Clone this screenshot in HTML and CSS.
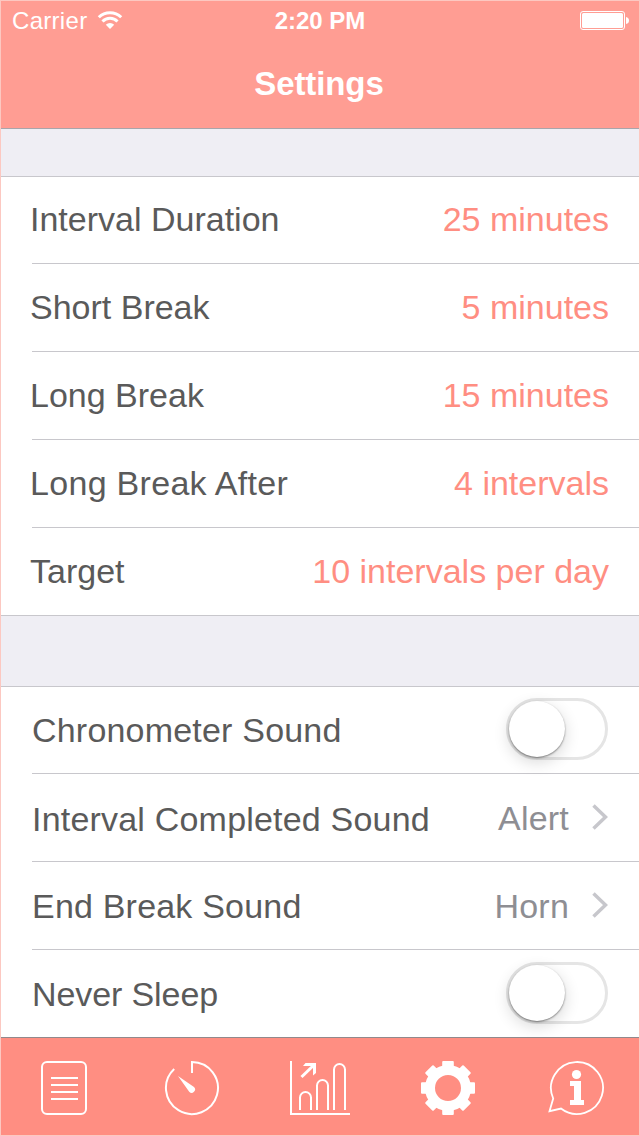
FILE: index.html
```html
<!DOCTYPE html>
<html lang="en">
<head>
    <meta charset="UTF-8">
    <meta name="viewport" content="width=device-width, initial-scale=1.0">
    <title>Settings</title>
    <link rel="stylesheet" href="styles.css">
</head>
<body>
    <div class="phone">
        <header class="header">
            <div class="status-bar">
                <div class="carrier">
                    <span>Carrier</span>
                    <svg class="wifi" width="26" height="20" viewBox="0 0 26 20">
                        <g fill="none" stroke="#fff" stroke-width="3">
                            <path d="M1.800 7.200A16 16 0 0 1 24.200 7.200"/>
                            <path d="M5.500 11.500A10.500 10.500 0 0 1 20.500 11.500"/>
                        </g>
                        <path d="M13 19L8.800 14.800A6 6 0 0 1 17.200 14.800Z" fill="#fff"/>
                    </svg>
                </div>
                <div class="time">2:20 PM</div>
                <svg class="battery" width="49" height="19" viewBox="0 0 49 19">
                    <rect x=".5" y=".5" width="44" height="18" rx="2.5" fill="none" stroke="#fff"/>
                    <rect x="2" y="2" width="41" height="15" rx="1.5" fill="#fff"/>
                    <path d="M46 6Q49 6.500 49 9.500T46 13Z" fill="#fff"/>
                </svg>
            </div>
            <h1 class="title">Settings</h1>
        </header>

        <main class="content">
            <div class="group durations">
                <div class="row first"><span class="label">Interval Duration</span><span class="value">25 minutes</span></div>
                <div class="row"><span class="label">Short Break</span><span class="value">5 minutes</span></div>
                <div class="row"><span class="label">Long Break</span><span class="value">15 minutes</span></div>
                <div class="row"><span class="label wide">Long Break After</span><span class="value">4 intervals</span></div>
                <div class="row"><span class="label">Target</span><span class="value">10 intervals per day</span></div>
            </div>

            <div class="group sounds">
                <div class="row first">
                    <span class="label">Chronometer Sound</span>
                    <span class="switch"><span class="knob"></span></span>
                </div>
                <div class="row">
                    <span class="label low">Interval Completed Sound</span>
                    <span class="detail">Alert
                        <svg class="chevron" width="17" height="26" viewBox="0 0 17 26"><path d="M2.500 1.500L14.500 13L2.500 24.500"/></svg>
                    </span>
                </div>
                <div class="row">
                    <span class="label">End Break Sound</span>
                    <span class="detail">Horn
                        <svg class="chevron" width="17" height="26" viewBox="0 0 17 26"><path d="M2.500 1.500L14.500 13L2.500 24.500"/></svg>
                    </span>
                </div>
                <div class="row">
                    <span class="label tight">Never Sleep</span>
                    <span class="switch"><span class="knob"></span></span>
                </div>
            </div>
        </main>

        <nav class="tab-bar">
            <a class="tab">
                <svg class="icon" viewBox="0 0 60 60">
                    <rect x="8" y="4" width="44" height="52" rx="5"/>
                    <path d="M17 20H44M17 27H44M17 34H44M17 41H44"/>
                </svg>
            </a>
            <a class="tab">
                <svg class="icon" viewBox="0 0 60 60">
                    <path d="M30 15V4A26 26 0 1 1 12.200 11"/>
                    <path class="solid" d="M16 18L32 29A3.300 3.300 0 1 1 27.200 33.800Z"/>
                </svg>
            </a>
            <a class="tab">
                <svg class="icon" viewBox="0 0 60 60">
                    <path d="M1 3V56H60"/>
                    <path d="M10 52V39.500A5.500 5.500 0 0 1 21 39.500V52M27 52V27.500A5.500 5.500 0 0 1 38 27.500V52M44 52V11.500A5.500 5.500 0 0 1 55 11.500V52"/>
                    <path d="M11.500 19L24.500 6.500" stroke-width="3"/>
                    <path class="solid" d="M15.500 5H26V15L23 17.500V8H13Z"/>
                </svg>
            </a>
            <a class="tab">
                <svg class="icon" viewBox="0 0 60 60">
                    <circle cx="30" cy="30" r="18" stroke-width="10"/>
                    <g class="solid">
                        <rect id="tooth" x="24.200" y="3" width="11.600" height="9" rx="1"/>
                        <use href="#tooth" transform="rotate(45 30 30)"/>
                        <use href="#tooth" transform="rotate(90 30 30)"/>
                        <use href="#tooth" transform="rotate(135 30 30)"/>
                        <use href="#tooth" transform="rotate(180 30 30)"/>
                        <use href="#tooth" transform="rotate(225 30 30)"/>
                        <use href="#tooth" transform="rotate(270 30 30)"/>
                        <use href="#tooth" transform="rotate(315 30 30)"/>
                    </g>
                </svg>
            </a>
            <a class="tab">
                <svg class="icon" viewBox="0 0 60 60">
                    <path d="M7.200 40.500A26 26 0 1 1 15 50.500L3.500 53.200Z" stroke-width="1.800"/>
                    <circle class="solid" cx="30.500" cy="16.500" r="4.600"/>
                    <path class="solid" d="M24 23H35V42H38V47H24V42H28V28H24Z"/>
                </svg>
            </a>
        </nav>
    </div>
</body>
</html>
```

FILE: styles.css
```css
* {
    box-sizing: border-box;
}
body {
    font-family: "Liberation Sans", Arial, sans-serif;
    margin: 0;
    background-color: #efeef4;
}
.phone {
    position: relative;
    display: flex;
    flex-direction: column;
    width: 640px;
    height: 1136px;
    overflow: hidden;
}
.phone::after {
    content: "";
    position: absolute;
    inset: 0;
    border: 1px solid #fcc8c1;
}
.header {
    height: 129px;
    background: #ff9d93;
    border-bottom: 1px solid #a9a5aa;
    color: #fff;
}
.status-bar {
    display: grid;
    grid-template-columns: 1fr auto 1fr;
    align-items: center;
    height: 40px;
    padding: 1px 11px 0 12px;
    font-size: 24px;
}
.carrier {
    display: flex;
    align-items: center;
    gap: 10px;
    letter-spacing: 0.3px;
}
.wifi {
    margin-top: -2px;
}
.time {
    font-weight: bold;
    margin-right: 1px;
}
.battery {
    justify-self: end;
}
.title {
    margin: 0;
    font-size: 33px;
    line-height: 40px;
    padding: 24px 2px 0 0;
    text-align: center;
    letter-spacing: -0.1px;
}
.group {
    background: #fff;
    border-top: 1px solid #c8c7cc;
}
.durations {
    margin-top: 47px;
    border-bottom: 1px solid #c8c7cc;
}
.sounds {
    margin-top: 70px;
}
.row {
    display: flex;
    align-items: center;
    justify-content: space-between;
    height: 88px;
    margin-left: 32px;
    padding-right: 32px;
    border-bottom: 1px solid #c8c7cc;
    font-size: 34px;
    line-height: 40px;
    letter-spacing: 0.2px;
}
.durations .row {
    padding-bottom: 2px;
}
.row.first {
    height: 87px;
}
.durations .row:last-child,
.sounds .row:last-child {
    height: 87px;
    border-bottom: none;
}
.label {
    color: #5a5a5a;
    margin-left: -2px;
}
.durations .label {
    letter-spacing: 0;
}
.durations .label.wide {
    letter-spacing: 0.3px;
}
.sounds .label {
    margin-left: 0;
}
.label.low {
    padding-top: 2px;
}
.label.tight {
    letter-spacing: -0.1px;
}
.value {
    color: #ff8e82;
    letter-spacing: 0;
    margin-right: -1px;
}
.detail {
    display: flex;
    align-items: center;
    gap: 22px;
    color: #8e8e93;
}
.chevron {
    margin-top: -1px;
    fill: none;
    stroke: #c7c7cc;
    stroke-width: 3.5;
}
.switch {
    width: 102px;
    height: 62px;
    margin-bottom: 2px;
    border: 3px solid #e5e5e5;
    border-radius: 31px;
}
.knob {
    display: block;
    width: 56px;
    height: 56px;
    margin-left: -0.5px;
    border-radius: 50%;
    background: #fff;
    box-shadow: 0 1px 2px rgba(0, 0, 0, 0.45), 0 5px 16px rgba(0, 0, 0, 0.16);
}
.tab-bar {
    display: flex;
    height: 99px;
    background: #ff8e82;
    border-top: 1px solid #91898c;
}
.tab {
    flex: 1;
    display: flex;
    justify-content: center;
    padding-top: 20px;
}
.icon {
    width: 60px;
    height: 60px;
    fill: none;
    stroke: #fff;
    stroke-width: 2;
}
.solid {
    fill: #fff;
    stroke: none;
}
```
